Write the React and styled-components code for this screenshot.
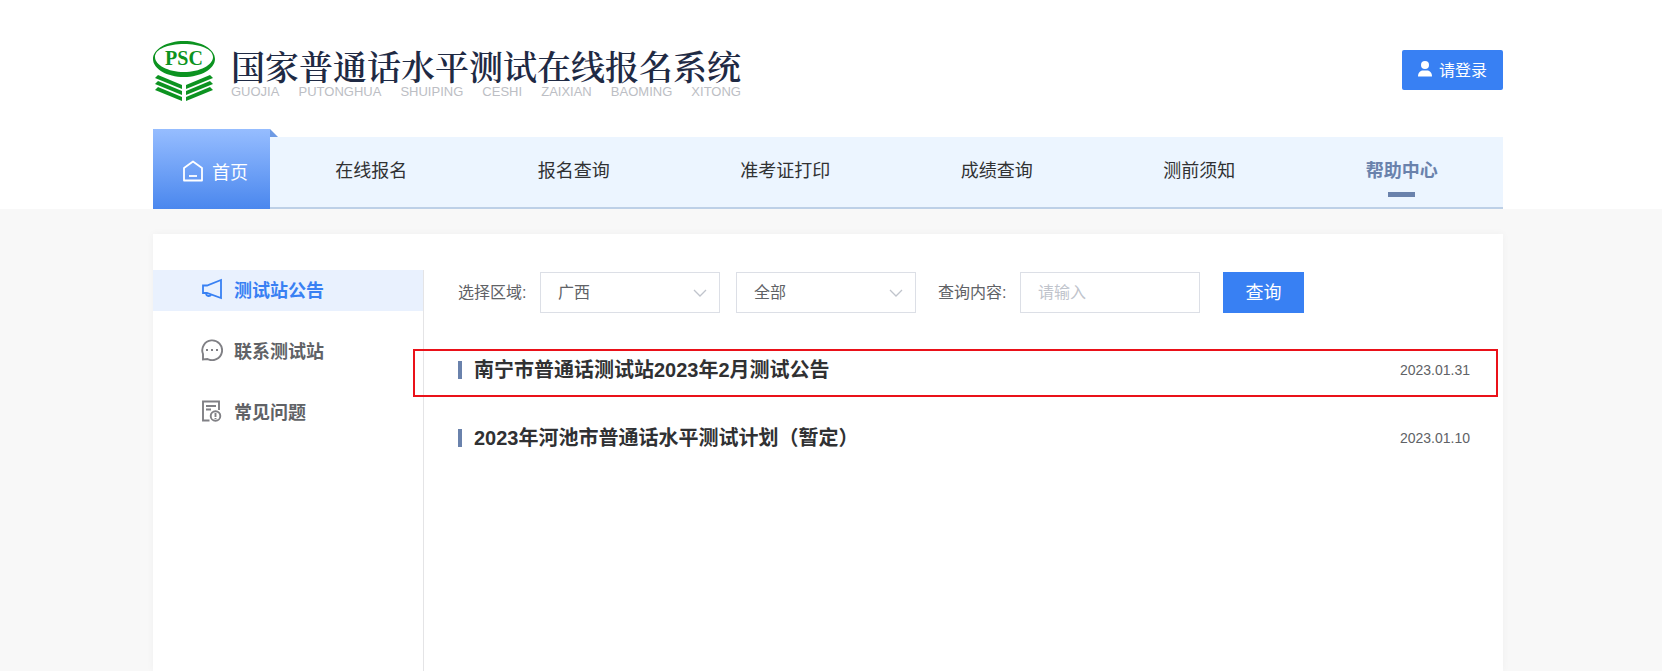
import React, { useState } from "react";
import styled, { createGlobalStyle, css } from "styled-components";

const GlobalStyle = createGlobalStyle`
  * {
    box-sizing: border-box;
  }

  body {
    margin: 0;
    background: #f8f8f8;
    color: #303133;
    font-family: "Liberation Sans", "Noto Sans CJK SC", sans-serif;
    font-size: 16px;
  }

  button,
  input,
  select {
    font-family: inherit;
  }

  a {
    color: inherit;
    text-decoration: none;
  }
`;

const Page = styled.div`
  min-height: 100vh;
  display: flex;
  flex-direction: column;
`;

const Header = styled.header`
  background: #fff;
  padding-right: 6px;
`;

const Container = styled.div`
  width: 100%;
  max-width: 1350px;
  margin: 0 auto;
`;

const TopBar = styled(Container)`
  display: flex;
  justify-content: space-between;
  align-items: center;
  padding: 41px 0 27px;
`;

const Brand = styled.a`
  display: flex;
  align-items: center;
  gap: 16px;
`;

const BrandText = styled.div`
  display: flex;
  flex-direction: column;
  padding-top: 4px;
`;

const BrandName = styled.h1`
  margin: 0;
  font-family: "Noto Serif CJK SC", "Noto Sans CJK SC", serif;
  font-size: 34px;
  font-weight: 600;
  line-height: 36px;
  color: #1f2a44;
`;

const BrandPinyin = styled.div`
  display: flex;
  justify-content: space-between;
  font-size: 13px;
  line-height: 16px;
  color: #bcbec4;
`;

const LoginButton = styled.button`
  display: flex;
  align-items: center;
  gap: 7px;
  height: 40px;
  margin-bottom: 4px;
  padding: 0 16px 2px;
  border: none;
  border-radius: 2px;
  background: #3880f3;
  color: #fff;
  font-size: 16px;
  cursor: pointer;

  &:hover {
    opacity: 0.9;
  }
`;

const Nav = styled(Container).attrs({ as: "nav" })`
  display: flex;
  align-items: flex-end;
`;

const HomeTab = styled.a`
  position: relative;
  display: flex;
  align-items: center;
  justify-content: center;
  gap: 9px;
  width: 117px;
  height: 80px;
  padding: 4px 0 0 8px;
  background: linear-gradient(#96bdff, #4a87ee);
  color: #fff;
  font-size: 18px;

  &::after {
    content: "";
    position: absolute;
    left: 100%;
    top: 0;
    border-bottom: 8px solid #6d9ae4;
    border-right: 8px solid transparent;
  }
`;

const NavList = styled.div`
  flex: 1;
  display: flex;
  justify-content: space-around;
  height: 72px;
  background: #ecf5ff;
  border-bottom: 2px solid #bdd0e7;
`;

const NavLink = styled.a`
  position: relative;
  font-size: 18px;
  line-height: 68px;

  ${(props) =>
    props.$active &&
    css`
      color: #6a82ac;
      font-weight: bold;

      &::after {
        content: "";
        position: absolute;
        left: 50%;
        bottom: 10px;
        width: 27px;
        height: 5px;
        margin-left: -14px;
        background: #6a82ac;
      }
    `}
`;

const Main = styled.main`
  flex: 1;
  display: flex;
  padding: 25px 6px 0 0;
`;

const Card = styled(Container)`
  display: flex;
  padding-top: 36px;
  background: #fff;
  box-shadow: 0 0 8px rgba(0, 0, 0, 0.04);
`;

const Sidebar = styled.aside`
  display: flex;
  flex-direction: column;
  gap: 20px;
  width: 271px;
  border-right: 1px solid #e4e4e6;
`;

const SideItem = styled.a`
  display: flex;
  align-items: center;
  gap: 11px;
  height: 41px;
  padding: 0 0 3px 48px;
  background: ${(props) => (props.$active ? "#e9f1fe" : "transparent")};
  color: ${(props) => (props.$active ? "#3880f3" : "#606266")};
  font-size: 18px;
  font-weight: bold;
`;

const Content = styled.section`
  flex: 1;
  padding: 2px 33px 0 34px;
`;

const SearchForm = styled.form`
  display: flex;
  align-items: center;
  color: #606266;
`;

const Label = styled.label`
  width: 82px;
  padding-bottom: 3px;
  white-space: nowrap;
`;

const SelectWrap = styled.div`
  position: relative;
  width: 180px;
  margin-right: ${(props) => (props.$last ? "22px" : "16px")};

  svg {
    position: absolute;
    right: 13px;
    top: 14px;
    pointer-events: none;
  }
`;

const field = css`
  width: 180px;
  height: 41px;
  padding: 0 17px;
  border: 1px solid #dcdfe6;
  border-radius: 0;
  background: #fff;
  color: #606266;
  font-size: 16px;
  outline: none;

  &:focus {
    border-color: #3880f3;
  }
`;

const Select = styled.select`
  ${field}
  display: block;
  appearance: none;
`;

const Input = styled.input`
  ${field}

  &::placeholder {
    color: #c0c4cc;
  }
`;

const SearchButton = styled.button`
  width: 81px;
  height: 41px;
  margin-left: 23px;
  padding: 0 0 4px;
  border: none;
  background: #3880f3;
  color: #fff;
  font-size: 18px;
  cursor: pointer;
`;

const NoticeList = styled.ul`
  margin: 43px 0 0;
  padding: 0;
  list-style: none;
  display: flex;
  flex-direction: column;
  gap: 40px;
`;

const Notice = styled.li`
  position: relative;
  display: flex;
  align-items: center;
  height: 28px;

  &::before {
    content: "";
    width: 4px;
    height: 18px;
    margin-right: 12px;
    background: #6a82ac;
  }
`;

const NoticeTitle = styled.a`
  flex: 1;
  font-size: 20px;
  font-weight: bold;
  line-height: 28px;
`;

const NoticeDate = styled.time`
  color: #606266;
  font-size: 14px;
`;

const Highlight = styled.span`
  position: absolute;
  top: -7px;
  bottom: -13px;
  left: -45px;
  right: -28px;
  border: 2px solid #ea1119;
  pointer-events: none;
`;

const LogoIcon = () => (
  <svg width="62" height="61" viewBox="0 0 62 61" aria-hidden="true">
    <path
      fillRule="evenodd"
      fill="#0c9320"
      d="M31 0C48 0 62 8 62 18S48 36 31 36 0 28 0 18 14 0 31 0ZM31 3C15 3 2 8 2 16S15 31 31 31 60 24 60 16 47 3 31 3Z"
    />
    <text
      x="31"
      y="24"
      textAnchor="middle"
      fill="#0c9320"
      fontFamily="Liberation Serif, serif"
      fontWeight="bold"
      fontSize="20"
    >
      PSC
    </text>
    <g fill="#0c9320">
      <path d="M5 34L29 44V48L2 37Z" />
      <path d="M5 40L29 50V54L2 43Z" />
      <path d="M5 46L29 56V60L2 49Z" />
      <path d="M57 34L33 44V48L60 37Z" />
      <path d="M57 40L33 50V54L60 43Z" />
      <path d="M57 46L33 56V60L60 49Z" />
    </g>
  </svg>
);

const UserIcon = () => (
  <svg width="14" height="16" viewBox="0 0 14 16" fill="#fff" aria-hidden="true">
    <circle cx="7" cy="4" r="4" />
    <path d="M0 15.5C0 12 2 9.5 5 9.5H9C12 9.5 14 12 14 15.5Z" />
  </svg>
);

const HomeIcon = () => (
  <svg width="20" height="22" viewBox="0 0 20 22" fill="none" stroke="#fff" strokeWidth="1.8" strokeLinejoin="round" aria-hidden="true">
    <path d="M1 8L10 1.5L19 8V20.5H1Z" />
    <path d="M6 16H14" />
  </svg>
);

const HornIcon = () => (
  <svg width="22" height="22" viewBox="0 0 22 22" fill="none" stroke="currentColor" strokeWidth="1.8" aria-hidden="true">
    <path d="M2 7.5H6L20 2V20L6 15H2Z" />
    <path d="M5 15C5 19 10 18.5 10 16.5" />
  </svg>
);

const ChatIcon = () => (
  <svg width="22" height="22" viewBox="0 0 22 22" fill="none" stroke="#808085" strokeWidth="1.9" aria-hidden="true">
    <path d="M2 20.5V15A9.9 9.9 0 1 1 6.5 20Z" />
    <path d="M5 11H7M10 11H12M15 11H17" strokeWidth="2" />
  </svg>
);

const FaqIcon = () => (
  <svg width="22" height="22" viewBox="0 0 22 22" fill="none" stroke="#808085" strokeWidth="1.9" aria-hidden="true">
    <path d="M8.5 20.5H2V1.5H18V10" />
    <path d="M5 6H15M5 9.5H10" />
    <circle cx="14.5" cy="16" r="4.8" />
    <path d="M14.5 13V17M14.5 18V19" />
  </svg>
);

const ArrowIcon = () => (
  <svg width="14" height="14" viewBox="0 0 14 14" fill="none" stroke="#c0c4cc" strokeWidth="1.3" aria-hidden="true">
    <path d="M1 4L7 10L13 4" />
  </svg>
);

const pinyin = ["GUOJIA", "PUTONGHUA", "SHUIPING", "CESHI", "ZAIXIAN", "BAOMING", "XITONG"];

const navItems = ["在线报名", "报名查询", "准考证打印", "成绩查询", "测前须知", "帮助中心"];

const sideItems = [
  { label: "测试站公告", Icon: HornIcon },
  { label: "联系测试站", Icon: ChatIcon },
  { label: "常见问题", Icon: FaqIcon },
];

const notices = [
  { title: "南宁市普通话测试站2023年2月测试公告", date: "2023.01.31", marked: true },
  { title: "2023年河池市普通话水平测试计划（暂定）", date: "2023.01.10" },
];

function App() {
  const [activeSide, setActiveSide] = useState("测试站公告");
  const [keyword, setKeyword] = useState("");

  return (
    <Page>
      <GlobalStyle />
      <Header>
        <TopBar>
          <Brand href="#">
            <LogoIcon />
            <BrandText>
              <BrandName>国家普通话水平测试在线报名系统</BrandName>
              <BrandPinyin>
                {pinyin.map((word) => (
                  <span key={word}>{word}</span>
                ))}
              </BrandPinyin>
            </BrandText>
          </Brand>
          <LoginButton type="button">
            <UserIcon />
            请登录
          </LoginButton>
        </TopBar>
        <Nav>
          <HomeTab href="#">
            <HomeIcon />
            首页
          </HomeTab>
          <NavList>
            {navItems.map((item) => (
              <NavLink key={item} href="#" $active={item === "帮助中心"}>
                {item}
              </NavLink>
            ))}
          </NavList>
        </Nav>
      </Header>

      <Main>
        <Card>
          <Sidebar>
            {sideItems.map(({ label, Icon }) => (
              <SideItem
                key={label}
                href="#"
                $active={label === activeSide}
                onClick={() => setActiveSide(label)}
              >
                <Icon />
                {label}
              </SideItem>
            ))}
          </Sidebar>
          <Content>
            <SearchForm onSubmit={(e) => e.preventDefault()}>
              <Label htmlFor="area">选择区域:</Label>
              <SelectWrap>
                <Select id="area">
                  <option>广西</option>
                </Select>
                <ArrowIcon />
              </SelectWrap>
              <SelectWrap $last>
                <Select aria-label="城市">
                  <option>全部</option>
                </Select>
                <ArrowIcon />
              </SelectWrap>
              <Label htmlFor="keyword">查询内容:</Label>
              <Input
                id="keyword"
                placeholder="请输入"
                value={keyword}
                onChange={(e) => setKeyword(e.target.value)}
              />
              <SearchButton type="submit">查询</SearchButton>
            </SearchForm>
            <NoticeList>
              {notices.map((notice) => (
                <Notice key={notice.title}>
                  <NoticeTitle href="#">{notice.title}</NoticeTitle>
                  <NoticeDate>{notice.date}</NoticeDate>
                  {notice.marked && <Highlight />}
                </Notice>
              ))}
            </NoticeList>
          </Content>
        </Card>
      </Main>
    </Page>
  );
}

export default App;
